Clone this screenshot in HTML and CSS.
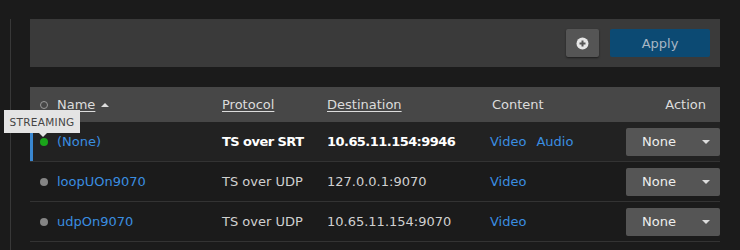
FILE: index.html
```html
<!DOCTYPE html>
<html lang="en">
<head>
  <meta charset="UTF-8" />
  <title>Streams</title>
  <link rel="stylesheet" href="styles.css">
</head>
<body>
  <div class="page">
    <div class="toolbar">
      <button class="btn-add" title="Add">
        <svg width="13" height="13" viewBox="0 0 13 13"><circle cx="6.5" cy="6.5" r="6" fill="#e6e6e6"/><path d="M6.5 3.5v6M3.5 6.5h6" stroke="#555" stroke-width="2"/></svg>
      </button>
      <button class="btn-apply">Apply</button>
    </div>

    <div class="table">
      <div class="row head">
        <div class="cell dot-cell"><span class="dot hollow"></span></div>
        <div class="cell"><a class="sort">Name</a><span class="caret-up"></span></div>
        <div class="cell"><a class="sort">Protocol</a></div>
        <div class="cell"><a class="sort">Destination</a></div>
        <div class="cell content-head">Content</div>
        <div class="cell action-head">Action</div>
      </div>

      <div class="row active">
        <span class="tooltip">STREAMING</span>
        <div class="cell dot-cell"><span class="dot green"></span></div>
        <div class="cell"><a class="link">(None)</a></div>
        <div class="cell">TS over SRT</div>
        <div class="cell">10.65.11.154:9946</div>
        <div class="cell"><a class="link">Video</a><a class="link">Audio</a></div>
        <div class="cell"><div class="select">None<span class="caret-down"></span></div></div>
      </div>

      <div class="row">
        <div class="cell dot-cell"><span class="dot"></span></div>
        <div class="cell"><a class="link">loopUOn9070</a></div>
        <div class="cell">TS over UDP</div>
        <div class="cell">127.0.0.1:9070</div>
        <div class="cell"><a class="link">Video</a></div>
        <div class="cell"><div class="select">None<span class="caret-down"></span></div></div>
      </div>

      <div class="row">
        <div class="cell dot-cell"><span class="dot"></span></div>
        <div class="cell"><a class="link">udpOn9070</a></div>
        <div class="cell">TS over UDP</div>
        <div class="cell">10.65.11.154:9070</div>
        <div class="cell"><a class="link">Video</a></div>
        <div class="cell"><div class="select">None<span class="caret-down"></span></div></div>
      </div>
    </div>
  </div>
</body>
</html>
```

FILE: styles.css
```css
html, body {
  margin: 0;
}

body {
  background-color: #1b1b1b;
  font-family: 'DejaVu Sans', Verdana, sans-serif;
  font-size: 13px;
  color: #d0d0d0;
  overflow: hidden;
}

.page {
  margin-left: 10px;
  margin-top: 19px;
  padding-left: 19px;
  border-left: 1px solid #383838;
  height: calc(100vh - 19px);
  box-sizing: border-box;
  width: 710px;
}

.toolbar {
  height: 48px;
  background-color: #3a3a3a;
  display: flex;
  align-items: center;
  justify-content: flex-end;
  gap: 11px;
  padding-right: 10px;
  box-sizing: border-box;
}

.toolbar button {
  border: none;
  height: 28px;
  border-radius: 2px;
  font-family: inherit;
  padding: 0;
}

.btn-add {
  width: 33px;
  background-color: #555;
  box-shadow: 0 1px 2px rgba(0,0,0,0.5);
  display: flex;
  align-items: center;
  justify-content: center;
}

.btn-apply {
  width: 100px;
  background-color: #0c4a73;
  color: #a8b6c4;
  font-size: 13px;
}

.table {
  margin-top: 20px;
}

.row {
  display: grid;
  grid-template-columns: 27px 165px 105px 163px 136px 94px;
  height: 39px;
  align-items: center;
  border-bottom: 1px solid #333;
  position: relative;
}

.row.head {
  height: 35px;
  background-color: #474747;
  border-bottom: none;
  color: #dcdcdc;
}

.row.active {
  background-color: #222;
  box-shadow: inset 3px 0 0 #3a87d0;
  color: #fff;
  font-weight: bold;
  letter-spacing: -0.55px;
}

.cell {
  white-space: nowrap;
  display: flex;
  align-items: center;
}

.dot-cell {
  justify-content: center;
}

.dot {
  width: 8px;
  height: 8px;
  border-radius: 50%;
  background-color: #858585;
}

.dot.green {
  background-color: #1aa51a;
}

.dot.hollow {
  width: 6px;
  height: 6px;
  background: none;
  border: 1px solid #9a9a9a;
}

.sort {
  text-decoration: underline;
  text-underline-offset: 2px;
}

.caret-up {
  margin-left: 6px;
  border-left: 4px solid transparent;
  border-right: 4px solid transparent;
  border-bottom: 4px solid #ddd;
}

.content-head {
  padding-left: 2px;
}

.action-head {
  justify-content: flex-end;
  padding-right: 14px;
}

.link {
  color: #3a8ee0;
  font-weight: normal;
  letter-spacing: 0;
  margin-right: 10px;
}

.select {
  width: 94px;
  height: 28px;
  box-sizing: border-box;
  background-color: #555;
  border-radius: 2px;
  color: #eee;
  font-weight: normal;
  letter-spacing: 0;
  display: flex;
  align-items: center;
  justify-content: space-between;
  padding: 0 10px 0 16px;
}

.caret-down {
  border-left: 4px solid transparent;
  border-right: 4px solid transparent;
  border-top: 4px solid #ddd;
}

.tooltip {
  position: absolute;
  left: -26px;
  top: -12px;
  width: 76px;
  height: 23px;
  box-sizing: border-box;
  background-color: #e4e4e4;
  color: #444;
  font-size: 10.5px;
  font-weight: normal;
  letter-spacing: 0.3px;
  display: flex;
  align-items: center;
  justify-content: center;
  z-index: 2;
}

.tooltip::after {
  content: "";
  position: absolute;
  left: 35px;
  bottom: -4px;
  border-left: 4px solid transparent;
  border-right: 4px solid transparent;
  border-top: 4px solid #e4e4e4;
}
```
